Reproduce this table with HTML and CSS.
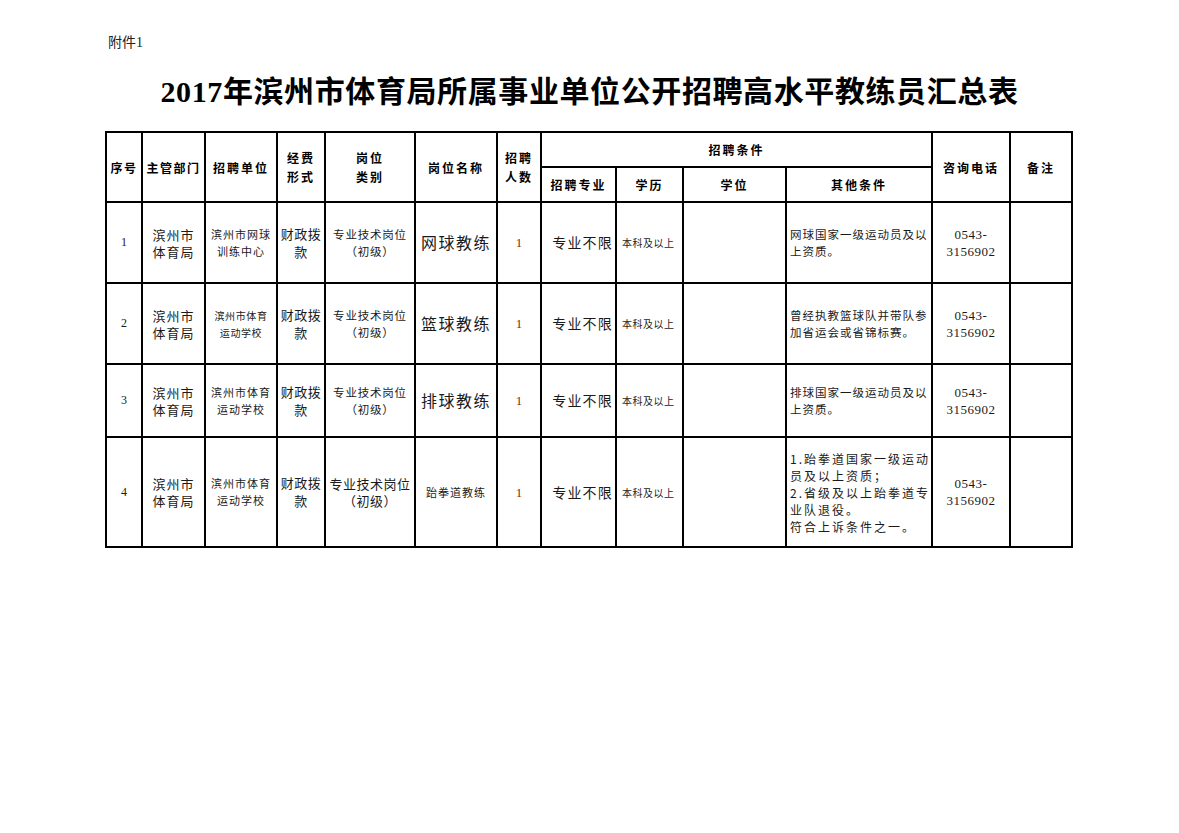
FILE: index.html
```html
<!DOCTYPE html>
<html lang="zh-CN">
<head>
<meta charset="utf-8">
<title>2017年滨州市体育局所属事业单位公开招聘高水平教练员汇总表</title>
<link rel="stylesheet" href="styles.css">
</head>
<body>
<div class="page">
  <div class="attach">附件1</div>
  <h1 class="title">2017年滨州市体育局所属事业单位公开招聘高水平教练员汇总表</h1>
  <table class="grid">
    <colgroup>
      <col class="c1"><col class="c2"><col class="c3"><col class="c4"><col class="c5"><col class="c6"><col class="c7"><col class="c8"><col class="c9"><col class="c10"><col class="c11"><col class="c12"><col class="c13">
    </colgroup>
    <thead>
      <tr class="h1">
        <th rowspan="2" class="tight">序号</th>
        <th rowspan="2" class="tight">主管部门</th>
        <th rowspan="2">招聘单位</th>
        <th rowspan="2" class="two">经费<br>形式</th>
        <th rowspan="2" class="two">岗位<br>类别</th>
        <th rowspan="2">岗位名称</th>
        <th rowspan="2" class="two">招聘<br>人数</th>
        <th colspan="4">招聘条件</th>
        <th rowspan="2">咨询电话</th>
        <th rowspan="2">备注</th>
      </tr>
      <tr class="h2">
        <th>招聘专业</th>
        <th>学历</th>
        <th>学位</th>
        <th>其他条件</th>
      </tr>
    </thead>
    <tbody>
      <tr class="r1">
        <td class="num">1</td>
        <td class="dept">滨州市<br>体育局</td>
        <td class="unit">滨州市网球<br>训练中心</td>
        <td class="fund">财政拨<br>款</td>
        <td class="cat">专业技术岗位<br>（初级）</td>
        <td class="job">网球教练</td>
        <td class="count">1</td>
        <td class="major">专业不限</td>
        <td class="edu">本科及以上</td>
        <td></td>
        <td class="other">网球国家一级运动员及以上资质。</td>
        <td class="phone">0543-<br>3156902</td>
        <td></td>
      </tr>
      <tr class="r2">
        <td class="num">2</td>
        <td class="dept">滨州市<br>体育局</td>
        <td class="unit small">滨州市体育<br>运动学校</td>
        <td class="fund">财政拨<br>款</td>
        <td class="cat">专业技术岗位<br>（初级）</td>
        <td class="job">篮球教练</td>
        <td class="count">1</td>
        <td class="major">专业不限</td>
        <td class="edu">本科及以上</td>
        <td></td>
        <td class="other">曾经执教篮球队并带队参加省运会或省锦标赛。</td>
        <td class="phone">0543-<br>3156902</td>
        <td></td>
      </tr>
      <tr class="r3">
        <td class="num">3</td>
        <td class="dept">滨州市<br>体育局</td>
        <td class="unit">滨州市体育<br>运动学校</td>
        <td class="fund">财政拨<br>款</td>
        <td class="cat">专业技术岗位<br>（初级）</td>
        <td class="job">排球教练</td>
        <td class="count">1</td>
        <td class="major">专业不限</td>
        <td class="edu">本科及以上</td>
        <td></td>
        <td class="other">排球国家一级运动员及以上资质。</td>
        <td class="phone">0543-<br>3156902</td>
        <td></td>
      </tr>
      <tr class="r4">
        <td class="num">4</td>
        <td class="dept">滨州市<br>体育局</td>
        <td class="unit">滨州市体育<br>运动学校</td>
        <td class="fund">财政拨<br>款</td>
        <td class="cat wide">专业技术岗位<br>（初级）</td>
        <td class="job smalljob">跆拳道教练</td>
        <td class="count">1</td>
        <td class="major">专业不限</td>
        <td class="edu">本科及以上</td>
        <td></td>
        <td class="other big">1.跆拳道国家一级运动员及以上资质；<br>2.省级及以上跆拳道专业队退役。<br>符合上诉条件之一。</td>
        <td class="phone">0543-<br>3156902</td>
        <td></td>
      </tr>
    </tbody>
  </table>
</div>
</body>
</html>
```

FILE: styles.css
```css
html, body {
  margin: 0;
  padding: 0;
  background: #ffffff;
}

body {
  font-family: "Liberation Serif", "Noto Sans CJK SC", serif;
  color: #000;
}

.page {
  width: 1179px;
  padding-top: 34px;
}

.attach {
  margin-left: 108px;
  font-size: 14px;
  line-height: 18px;
  color: #222;
}

.title {
  margin: 22px 0 0 0;
  text-align: center;
  font-family: "Liberation Serif", "Noto Sans CJK SC", serif;
  font-weight: 700;
  font-size: 30px;
  line-height: 36px;
  letter-spacing: 0.6px;
  height: 36px;
}

.grid {
  margin-top: 21px;
  margin-left: 105px;
  width: 966px;
  border-collapse: collapse;
  table-layout: fixed;
  border: 2px solid #000;
}

.c1 { width: 36px; }
.c2 { width: 63px; }
.c3 { width: 72px; }
.c4 { width: 48px; }
.c5 { width: 90px; }
.c6 { width: 82px; }
.c7 { width: 44px; }
.c8 { width: 75px; }
.c9 { width: 67px; }
.c10 { width: 103px; }
.c11 { width: 146px; }
.c12 { width: 78px; }
.c13 { width: 62px; }

.grid th,
.grid td {
  border: 2px solid #000;
  padding: 0;
  text-align: center;
  vertical-align: middle;
  overflow: hidden;
}

.grid th {
  font-family: "Noto Sans CJK SC", sans-serif;
  font-weight: 700;
  font-size: 12px;
  line-height: 19px;
  letter-spacing: 2px;
}

.grid th.tight {
  letter-spacing: 1.5px;
}

.h1 { height: 35px; }
.h2 { height: 35px; }

.r1 { height: 81px; }
.r2 { height: 81px; }
.r3 { height: 73px; }
.r4 { height: 110px; }

.grid td {
  font-family: "Noto Sans CJK SC", sans-serif;
  font-weight: 400;
  font-size: 12px;
  line-height: 17px;
  color: #1a1a1a;
}

.grid td.num {
  font-family: "Liberation Serif", serif;
  font-size: 12px;
}

.grid td.dept {
  font-size: 13px;
  letter-spacing: 1px;
}

.grid td.unit {
  font-size: 11px;
  letter-spacing: 1px;
}

.grid td.unit.small {
  font-size: 10px;
  letter-spacing: 0.6px;
}

.grid td.fund {
  font-size: 13px;
  line-height: 18px;
  letter-spacing: 0.5px;
}

.grid td.cat {
  font-size: 11.5px;
  letter-spacing: 0.8px;
}

.grid td.cat.wide {
  font-size: 13px;
  letter-spacing: 0.5px;
}

.grid td.job {
  font-size: 16px;
  letter-spacing: 1.5px;
}

.grid td.job.smalljob {
  font-size: 11px;
  letter-spacing: 1px;
}

.grid td.count {
  font-family: "Liberation Serif", serif;
  font-size: 13px;
  color: #8a2a0c;
}

.grid td.major {
  font-size: 14px;
  letter-spacing: 1.2px;
  text-align: right;
  padding-right: 2px;
}

.grid td.edu {
  font-size: 10px;
  letter-spacing: 0.5px;
  text-align: left;
  padding-left: 5px;
}

.grid td.other {
  text-align: left;
  font-size: 11.5px;
  letter-spacing: 1px;
  line-height: 17px;
  padding-left: 3px;
  padding-right: 2px;
}

.grid td.other.big {
  font-size: 12px;
  letter-spacing: 2px;
  padding-right: 0;
}

.grid td.phone {
  font-family: "Liberation Serif", serif;
  font-size: 13px;
  line-height: 17px;
  letter-spacing: 0.5px;
}
```
